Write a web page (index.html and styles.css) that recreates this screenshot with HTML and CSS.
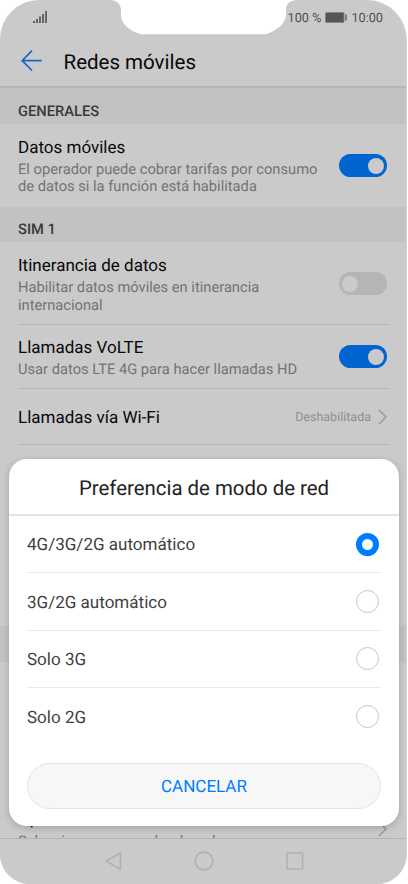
FILE: index.html
```
<!DOCTYPE html>
<html lang="es">
<head>
<meta charset="utf-8">
<title>Redes móviles</title>
<link rel="stylesheet" href="styles.css">
</head>
<body>
<div class="phone">
  <header class="status">
    <svg class="signal" width="14" height="12" viewBox="0 0 14 12"><path d="M1 10v2M4 8v4M7 5.5V12M10 3v9M13 0v12" stroke="#5a5a5a" stroke-width="1.8"/></svg>
    <div class="status-right">
      <span class="percent">100 %</span>
      <svg width="22" height="11" viewBox="0 0 22 11"><rect x=".5" y=".5" width="18.5" height="10" rx="1" fill="#555" stroke="#858585"/><path d="M21 2.5v6" stroke="#666" stroke-width="1.5"/></svg>
      <span class="clock">10:00</span>
    </div>
  </header>
  <div class="appbar">
    <svg width="22" height="22" viewBox="0 0 22 22" fill="none" stroke="#1268cc" stroke-width="1.7"><path d="M20.7 10.7H1.2M11 .7L1.2 10.7l9.8 9.8"/></svg>
    <h1>Redes móviles</h1>
  </div>
  <h2 class="section general">GENERALES</h2>
  <div class="row data">
    <div class="copy"><div class="name">Datos móviles</div><p>El operador puede cobrar tarifas por consumo<br>de datos si la función está habilitada</p></div>
    <div class="switch on"></div>
  </div>
  <h2 class="section sim">SIM 1</h2>
  <div class="row roaming">
    <div class="copy"><div class="name">Itinerancia de datos</div><p>Habilitar datos móviles en itinerancia<br>internacional</p></div>
    <div class="switch"></div>
  </div>
  <div class="row volte">
    <div class="copy"><div class="name">Llamadas VoLTE</div><p>Usar datos LTE 4G para hacer llamadas HD</p></div>
    <div class="switch on"></div>
  </div>
  <div class="row wifi">
    <div class="name">Llamadas vía Wi-Fi</div>
    <div class="value"><span>Deshabilitada</span><svg width="9" height="16" viewBox="0 0 9 16" fill="none" stroke="#969696" stroke-width="1.4"><path d="M1 1l7 7-7 7"/></svg></div>
  </div>
  <div class="spacer"></div>
  <div class="section blank"></div>
  <div class="rest">
    <div class="row operator">
      <div class="copy"><div class="name">Operador</div><p>Seleccione un operador de red</p></div>
      <svg width="9" height="16" viewBox="0 0 9 16" fill="none" stroke="#969696" stroke-width="1.4"><path d="M1 1l7 7-7 7"/></svg>
    </div>
  </div>
  <nav class="nav">
    <svg width="17" height="20" viewBox="0 0 17 20"><path d="M15.4 1.8v16.6L1.3 10z"/></svg>
    <svg width="20" height="20" viewBox="0 0 20 20"><circle cx="10" cy="10" r="8.9"/></svg>
    <svg width="18" height="20" viewBox="0 0 18 20"><rect x="1" y="2" width="15.6" height="16" rx=".6"/></svg>
  </nav>
  <svg class="notch" width="188" height="35" viewBox="0 0 188 35"><path d="M0 0C8 0 11 5 11 11V15C11 23 19 31 31 34.3H156C168 30 176 23 176 14V10C176 4 180 0 187 0Z" fill="#fff"/></svg>
  <section class="dialog">
    <h3>Preferencia de modo de red</h3>
    <div class="options">
      <div class="option"><span>4G/3G/2G automático</span><i class="radio checked"></i></div>
      <div class="option"><span>3G/2G automático</span><i class="radio"></i></div>
      <div class="option"><span>Solo 3G</span><i class="radio"></i></div>
      <div class="option"><span>Solo 2G</span><i class="radio"></i></div>
    </div>
    <button>CANCELAR</button>
  </section>
</div>
</body>
</html>
```
FILE: styles.css
```
* { box-sizing: border-box; }
html, body { margin: 0; background: #fff; }
body { width: 408px; height: 884px; overflow: hidden; font-family: Roboto, sans-serif; text-rendering: geometricPrecision; }
h1, h2, h3, p { margin: 0; font-weight: 400; }
svg { display: block; flex: none; }
.phone { position: relative; width: 407px; height: 884px; overflow: hidden; display: flex; flex-direction: column; background: #cacaca; border-radius: 39px 40px 30px 30px; border-right: 1px solid #d4d4d4; }
.status { height: 35px; flex: none; display: flex; justify-content: space-between; padding: 11px 23px 0 33px; color: #4e4e4e; font-size: 12.7px; line-height: 15px; }
.status-right { display: flex; gap: 4px; white-space: nowrap; }
.status-right svg { margin-top: 1px; }
.appbar { height: 53px; flex: none; display: flex; align-items: center; gap: 20.5px; padding: 1px 21px 0; border-bottom: 2px solid #b5b5b5; }
.appbar h1 { font-size: 20.5px; line-height: 26px; padding-top: 3px; color: #080808; }
.section { flex: none; background: #c2c2c2; padding-left: 18px; font-size: 14.7px; font-weight: 500; color: #393939; }
.general { height: 36px; line-height: 46px; }
.sim { height: 35px; line-height: 44px; }
.blank { height: 36px; }
.row { flex: none; margin: 0 17px 0 18px; display: flex; justify-content: space-between; border-bottom: 1px solid #b7b7b7; }
.name { font-size: 17px; line-height: 20px; color: #080808; white-space: nowrap; }
.copy p { font-size: 14.7px; line-height: 17.5px; color: #737373; white-space: nowrap; margin-top: 3px; }
.data { height: 83px; padding-top: 14px; border: 0; }
.data p { line-height: 17px; }
.roaming { height: 83px; padding-top: 14px; }
.volte { height: 64px; padding-top: 13px; }
.wifi { height: 56px; align-items: center; padding-top: 1px; }
.wifi .name { padding-top: 2px; }
.switch { width: 48px; height: 23px; border-radius: 12px; background: #b5b5b5; margin: 16px 2.5px 0 0; padding: 3.5px 3px; }
.switch::after { content: ""; display: block; width: 16px; height: 16px; border-radius: 50%; background: #cacaca; }
.switch.on { background: #0065d1; }
.switch.on::after { margin-left: 26px; }
.volte .switch { margin-top: 7px; }
.value { display: flex; align-items: center; gap: 7px; padding-right: 2px; color: #8f8f8f; font-size: 12.5px; }
.spacer { flex: 1; }
.rest { height: 176px; flex: none; overflow: hidden; padding-top: 134px; }
.operator { padding-top: 13px; border: 0; }
.operator p { margin-top: 4px; }
.operator > svg { margin: 12px 2px 0 0; }
.nav { height: 46px; flex: none; display: flex; justify-content: center; align-items: center; gap: 72px; padding: 0 0 2px 2px; border-top: 1px solid #b4b4b4; fill: none; stroke: #b1b1b1; stroke-width: 1.6; stroke-linejoin: round; background: #cacaca; }
.notch { position: absolute; top: 0; left: 110px; }
.dialog { position: absolute; left: 9px; top: 459px; width: 390px; height: 367px; background: #fff; border-radius: 18px; box-shadow: 0 2px 7px rgba(0,0,0,.2); }
.dialog h3 { height: 57px; border-bottom: 2px solid #e4e4e4; text-align: center; font-size: 20.4px; line-height: 58px; color: #222; }
.options { padding: 0 18px; }
.option { height: 57.4px; display: flex; align-items: center; justify-content: space-between; border-bottom: 1px solid #eaeaea; padding: 0 2px 0 0; font-size: 17.05px; color: #3f3f3f; }
.option span { padding-top: 2px; }
.option:last-child { border: 0; }
.radio { width: 23px; height: 23px; border: 1px solid #c6c6c6; border-radius: 50%; }
.checked { border: 6px solid #007dff; }
.dialog button { display: block; width: 354px; height: 46px; margin: 17px auto 0; padding: 2px 0 0; border: 1px solid #e3e3e3; border-radius: 23px; background: #f7f7f7; color: #007dff; font: 17px Roboto, sans-serif; text-rendering: geometricPrecision; }
```
